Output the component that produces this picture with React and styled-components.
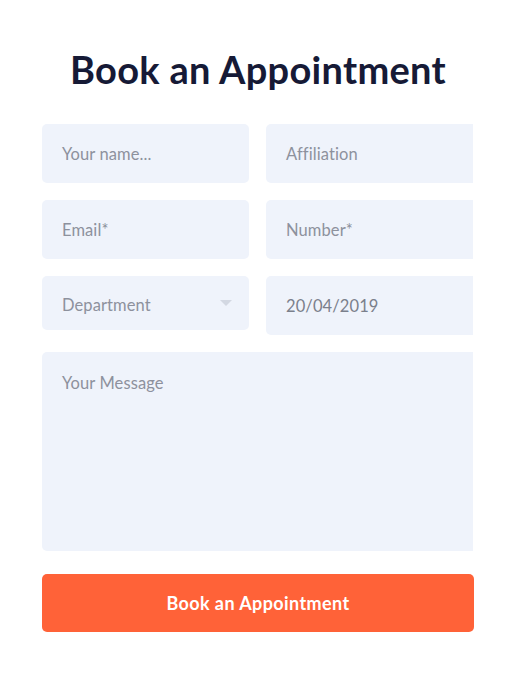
import React from 'react';
import styled, { createGlobalStyle } from 'styled-components';

const GlobalStyle = createGlobalStyle`
  body {
    margin: 0;
    background: #ffffff;
    font-family: Lato, 'Noto Sans', sans-serif;
  }
`;

const Page = styled.div`
  width: 520px;
  padding: 45px 0 0 42px;
  box-sizing: border-box;
`;

const Title = styled.h1`
  margin: 0 0 31px;
  width: 432px;
  text-align: center;
  font-size: 38px;
  font-weight: 700;
  line-height: 48px;
  letter-spacing: 0.3px;
  color: #161a36;
`;

const Clip = styled.div`
  width: 431px;
  overflow: hidden;
`;

const Grid = styled.div`
  display: grid;
  grid-template-columns: 207px 220px;
  column-gap: 17px;
  row-gap: 17px;
  align-items: start;
`;

const Field = styled.div`
  height: ${({ h }) => h || 59}px;
  border-radius: 5px;
  background: #eff3fb;
  display: flex;
  align-items: center;
  padding: ${({ h }) => (h ? '4px 20px 0' : '0 20px')};
  box-sizing: border-box;
  font-size: 16.5px;
  letter-spacing: 0.1px;
  color: ${({ filled }) => (filled ? '#7b808c' : '#8d919d')};
  position: relative;
`;

const Caret = styled.span`
  position: absolute;
  right: 17px;
  top: 24px;
  width: 0;
  height: 0;
  border-left: 6px solid transparent;
  border-right: 6px solid transparent;
  border-top: 6px solid #d3d8e2;
`;

const Message = styled.div`
  grid-column: 1 / -1;
  height: 199px;
  border-radius: 5px;
  background: #eff3fb;
  padding: 21px 20px;
  box-sizing: border-box;
  font-size: 16.5px;
  letter-spacing: 0.1px;
  color: #8d919d;
`;

const Button = styled.button`
  display: block;
  margin-top: 23px;
  width: 432px;
  height: 58px;
  border: none;
  border-radius: 5px;
  background: #ff6238;
  color: #ffffff;
  font-family: Lato, 'Noto Sans', sans-serif;
  font-size: 18px;
  font-weight: 700;
  letter-spacing: 0.4px;
  cursor: pointer;
`;

export default function App() {
  return (
    <>
      <GlobalStyle />
      <Page>
        <Title>Book an Appointment</Title>
        <Clip>
          <Grid>
            <Field>Your name...</Field>
            <Field>Affiliation</Field>
            <Field>Email*</Field>
            <Field>Number*</Field>
            <Field h={54}>
              Department
              <Caret />
            </Field>
            <Field filled>20/04/2019</Field>
            <Message>Your Message</Message>
          </Grid>
        </Clip>
        <Button>Book an Appointment</Button>
      </Page>
    </>
  );
}
